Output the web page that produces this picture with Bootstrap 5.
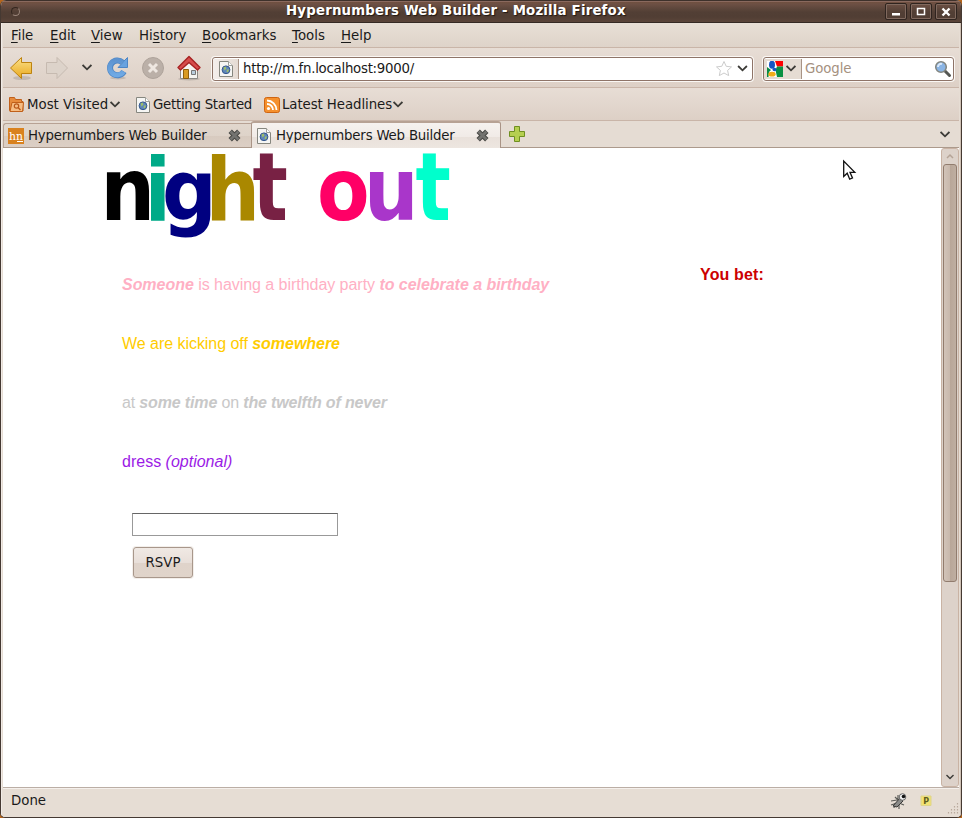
<!DOCTYPE html>
<html lang="en">
<head>
<meta charset="utf-8">
<title>Hypernumbers Web Builder</title>
<link href="https://cdn.jsdelivr.net/npm/bootstrap@5.3.0/dist/css/bootstrap.min.css" rel="stylesheet">
<style>
html,body{height:818px;overflow:hidden}
body{font-family:"DejaVu Sans",sans-serif;font-size:13.33px;line-height:16px;color:#1a1a1a;background:#b5651d}
svg{display:block;flex:none}
.win{width:962px;height:818px;border:solid #453932;border-width:0 1px 1px;border-radius:6px 6px 5px 5px;background:#e6ddd4;overflow:hidden}
.title-row{height:23px;background:linear-gradient(#3e312b 0,#3e312b 1px,#8a695e 1px,#8a695e 2px,#70503f 2px,#6d5044 4px,#523f35 12px,#513e34 17px,#5b453a 22px,#352a24 22px)}
.title-row h1{font-size:13.33px;line-height:20px;letter-spacing:.18px;font-weight:700;color:#fff;text-shadow:1px 1px 1px #211711;width:345px;margin:-2px auto 0 269px;white-space:nowrap}
.dot-btn{width:9px;height:9px;border:1px solid #33261f;border-right-color:#9a857a;border-bottom-color:#9a857a;border-radius:50%;margin-left:10px;margin-right:-3px}
.win-btn{width:22px;height:17px;border:1px solid #2f241f;border-radius:2px;box-shadow:inset 0 0 0 1px #80695e;margin-right:3px}
.win-btn:last-child{margin-right:4px}
.inner{padding:0 2px;box-shadow:inset 1px 0 #f1ebe6,inset -1px 0 #cfc1b5}
.bar{border-bottom:1px solid #c9b5a8;box-shadow:0 1px #f3eee9}
.menu-row{height:25px;padding-top:2px;background:linear-gradient(#e8dfd6,#ded3c9)}
.menu-row span{white-space:nowrap}
.menu-row u{text-underline-offset:2px}
.tool-row{height:40px;background:linear-gradient(#e7ddd5,#ddd0c6)}
.mark-row{height:33px;padding-top:1px;background:linear-gradient(#e7ddd5,#ddd0c6);white-space:nowrap}
.tight{letter-spacing:-.27px}
.tab-row{height:27px;border-bottom:1px solid #ac9a8c;background:#e5dcd3}
.field{height:24px;margin-top:2px;border:1px solid #8e7468;border-radius:3px;background:#fff;box-shadow:0 0 0 1px #faf7f4}
.field .ident{width:26px;height:20px;border-right:1px solid #a89486;background:linear-gradient(90deg,#f4efec,#e5dbd3)}
.tab-pane-btn{height:24px;margin-top:2px;width:248px;border:1px solid #b7a294;border-bottom:0;border-right:0;border-radius:3px 0 0 0;background:linear-gradient(#e1d7cd 0,#ded3c9 50%,#d7cabf 50%,#dccfc5);white-space:nowrap}
.tab-pane-btn span{width:200px;letter-spacing:-.2px}
.tab-pane-btn.is-front{width:250px;height:27px;margin-top:0;border-top:2px solid #b7a294;border-right:1px solid #a99486;border-left:1px solid #a99486;border-radius:3px 3px 0 0;background:linear-gradient(#f6f2ef 0,#f1ebe7 54%,#e9e1db 54%,#ede6e0)}
.view{height:639px;background:#fff;font-family:"Liberation Sans",Arial,sans-serif;font-size:16px;line-height:19px}
.page-area{width:938px}
.banner{overflow:visible}
.invite{padding-left:119px;width:697px}
.invite p{margin:0 0 40px;white-space:nowrap;letter-spacing:-.04px}
.invite .c-gray{letter-spacing:-.15px}
.invite .c-purple{letter-spacing:0}
.c-pink{color:#ffb0c4}.c-gold{color:#ffcc00}.c-gray{color:#c8c8c8}.c-purple{color:#9b1ae6}.c-red{color:#cc0000}
.answer{width:206px;height:23px;border:1px solid #999;border-top-color:#666;margin:42px 0 11px 10px;padding:0 4px;border-radius:0;background:#fff;display:block}
.rsvp{width:60px;height:31px;margin-left:11px;border:1px solid #a8978b;border-radius:3px;padding:0;font:13.33px/28px "DejaVu Sans",sans-serif;color:#1a1a1a;background:linear-gradient(#f0e9e4 0,#e8dfd9 50%,#dfd3ca 50%,#e0d4ca);box-shadow:0 0 0 1px #f3efeb}
.scroller{width:18px;border:1px solid #c9b3a4;border-radius:3px;background:#ddd2ca}
.thumb{width:14px;height:418px;border:1px solid #917c6e;border-radius:3px;background:linear-gradient(90deg,#d2c3b8 0,#c8b8ac 50%,#b8a698 50%,#bfaea1)}
.status-row{height:30px;border-top:1px solid #bbaea5;box-shadow:inset 0 1px #f5f0ec;background:#e6ddd4}
.pointer{position:absolute;left:842px;top:159px}
</style>
<script src="https://cdn.jsdelivr.net/npm/bootstrap@5.3.0/dist/js/bootstrap.bundle.min.js"></script>
</head>
<body>
<svg width="0" height="0" class="position-absolute">
<defs>
<linearGradient id="gy" x1="0" y1="0" x2="0" y2="1"><stop offset="0" stop-color="#fbe08a"/><stop offset="1" stop-color="#e9a81c"/></linearGradient>
<linearGradient id="gb" x1="0" y1="0" x2="0" y2="1"><stop offset="0" stop-color="#5d93d0"/><stop offset="1" stop-color="#6fa9e4"/></linearGradient>
<symbol id="doc" viewBox="0 0 14 16"><path d="M.5.5h9l4 4v11H.5z" fill="#f6f6f4" stroke="#86877f"/><path d="M9.500.5v4h4" fill="#fff" stroke="#a0a19b"/><circle cx="7" cy="8.800" r="3.900" fill="#5f86bb" stroke="#34568c"/><path d="M4.500 6.500l2-1 1 2-2 2zM8 8.500l2 0-1 3-1.500-1z" fill="#9fc06a"/></symbol>
<symbol id="chev" viewBox="0 0 10 7"><path d="M.6 1L5 5.300 9.400 1" fill="none" stroke="#3c3b37" stroke-width="1.800"/></symbol>
<symbol id="xx" viewBox="0 0 13 13"><path d="M2.200 2.200l8.600 8.600m0-8.600l-8.600 8.600" stroke="#484845" stroke-width="4.800"/><path d="M2.500 2.500l8 8m0-8l-8 8" stroke="#737370" stroke-width="2.800"/></symbol>
</defs></svg>
<div class="win">
<header class="title-row d-flex align-items-center">
<div class="dot-btn"></div><h1>Hypernumbers Web Builder - Mozilla Firefox</h1>
<div class="win-btn d-flex flex-shrink-0 align-items-center justify-content-center"><svg width="12" height="10"><path d="M2 6h8v2.500H2z" fill="#fff"/></svg></div>
<div class="win-btn d-flex flex-shrink-0 align-items-center justify-content-center"><svg width="12" height="10"><path d="M2.500 1.500h7v6h-7z" fill="none" stroke="#fff" stroke-width="1.500"/></svg></div>
<div class="win-btn d-flex flex-shrink-0 align-items-center justify-content-center"><svg width="12" height="10"><path d="M2.500 1.500l7 7m0-7l-7 7" stroke="#fff" stroke-width="2.400"/></svg></div>
</header>
<div class="inner">
<nav class="menu-row bar d-flex align-items-center">
<span style="margin-left:8px;width:39px"><u>F</u>ile</span><span style="width:41px"><u>E</u>dit</span><span style="width:48px"><u>V</u>iew</span><span style="width:63px">Hi<u>s</u>tory</span><span style="width:90px"><u>B</u>ookmarks</span><span style="width:49px"><u>T</u>ools</span><span><u>H</u>elp</span>
</nav>
<div class="tool-row bar d-flex align-items-center">
<svg width="36" height="26" viewBox="0 0 36 26"><ellipse cx="19" cy="23" rx="9" ry="2" fill="#000" opacity=".12"/><path d="M7.500 13L18.500 2.500v5h10v11h-10v5z" fill="url(#gy)" stroke="#bd830f" stroke-linejoin="round"/></svg>
<svg width="36" height="26" viewBox="0 0 36 26"><path d="M28.500 13L18 2.500v5H7.500v11H18v5z" fill="#ddd3ca" stroke="#c6bab0" stroke-linejoin="round"/></svg>
<svg width="10" height="7" style="margin-left:7px"><use href="#chev"/></svg>
<svg width="24" height="26" viewBox="0 0 24 26" style="margin-left:13px"><ellipse cx="13" cy="23" rx="8" ry="1.500" opacity=".12"/><path d="M18.900 16.500A7.400 7.400 0 1 1 17.500 7.500" fill="none" stroke="#4e86c5" stroke-width="6"/><path d="M22.500 2.500v10h-9.500l3.500-3.500 2.500-3z" fill="#69a2df" stroke="#4e86c5"/><path d="M18.500 16.500A7.400 7.400 0 1 1 17.500 7.500" fill="none" stroke="url(#gb)" stroke-width="4.500"/></svg>
<svg width="24" height="26" viewBox="0 0 24 26" style="margin-left:12px"><circle cx="12" cy="13" r="10.500" fill="#bbb0a8" stroke="#aea39b"/><path d="M8 9l8 8m0-8l-8 8" stroke="#eee7e1" stroke-width="3"/></svg>
<svg width="26" height="26" viewBox="0 0 26 26" style="margin-left:11px"><ellipse cx="13" cy="24" rx="11" ry="1.500" opacity=".15"/><path d="M4.500 13L13 6l8.500 7v10.500h-17z" fill="#f5f4f1" stroke="#8b8984"/><path d="M7.500 14.500h5v9h-5z" fill="#d99a22" stroke="#8f5e0c"/><path d="M15.500 15.500h4v4h-4z" fill="#b9cddd" stroke="#777"/><path d="M13 1.500L24 12.500l-2.500 2.500L13 7.500 4.500 15 2 12.500z" fill="#d64c4c" stroke="#a62222" stroke-width="1.400" stroke-linejoin="round"/></svg>
<div class="field d-flex align-items-center" style="width:541px;margin-left:10px"><div class="ident d-flex align-items-center justify-content-center"><svg width="14" height="16"><use href="#doc"/></svg></div><span class="flex-grow-1 ps-1 tight">http://m.fn.localhost:9000/</span><svg width="18" height="17" viewBox="0 0 18 17"><path d="M9 1.500l2.200 4.800 5.300.6-3.900 3.500 1.100 5.200L9 13l-4.700 2.600 1.100-5.200L1.500 6.900l5.300-.6z" fill="#fff" stroke="#ccc" stroke-linejoin="round"/></svg><svg width="11" height="7" style="margin:0 4px 0 4px"><use href="#chev"/></svg></div>
<div class="field d-flex align-items-center" style="width:191px;margin-left:10px"><div class="ident d-flex align-items-center" style="width:38px;background:#e5dcd3"><svg width="16" height="16" viewBox="0 0 16 16" style="margin-left:3px"><path d="M0 0h16v16H0z" fill="#fff"/><path d="M8 0h8v5.500H10z" fill="#f00"/><path d="M10 5.500h6V16H10L8.500 9z" fill="#099143"/><path d="M0 6v10h1.500L2 11l2-2z" fill="#098b43"/><ellipse cx="5" cy="3.700" rx="3" ry="4" fill="#1755c4"/><ellipse cx="7.500" cy="8.500" rx="2" ry="1.700" fill="#1755c4"/><ellipse cx="5" cy="13.200" rx="3.600" ry="2.400" fill="#f2ad19"/></svg><svg width="10" height="7" style="margin-left:3px"><use href="#chev"/></svg></div><span class="flex-grow-1" style="color:#a5917f;padding-left:3px;letter-spacing:-.1px">Google</span><svg width="18" height="18" viewBox="0 0 18 18" style="margin-right:1px"><path d="M11 11l4.500 4.500" stroke="#555753" stroke-width="3" stroke-linecap="round"/><circle cx="7" cy="7" r="5.300" fill="#8bb5e5" stroke="#83857f" stroke-width="1.500"/><path d="M4 7a3 3 0 0 1 4-3" stroke="#d9e9fb" stroke-width="2" fill="none"/></svg></div>
</div>
<div class="mark-row bar d-flex align-items-center">
<svg width="15" height="15" viewBox="0 0 15 15" style="margin-left:6px;margin-right:3px"><path d="M.5 13.500v-13h5l1 2h6v2h1.500v9.500z" fill="#e78b3c" stroke="#c0601a"/><path d="M3 5.500h11.500l-1 9H1z" fill="#f6bd83" stroke="#c0601a"/><circle cx="7.500" cy="9" r="2.200" fill="none" stroke="#b9581a" stroke-width="1.200"/><path d="M9 10.500l2.500 2.500" stroke="#b9581a" stroke-width="1.400"/></svg>
<span style="width:83px">Most Visited</span><svg width="10" height="7"><use href="#chev"/></svg>
<svg width="14" height="16" style="margin-left:16px;margin-right:3px"><use href="#doc"/></svg><span class="tight" style="width:111px">Getting Started</span>
<svg width="16" height="16" viewBox="0 0 16 16" style="margin-right:2px"><rect x=".5" y=".5" width="15" height="15" rx="2" fill="#f5902d" stroke="#cf6511"/><circle cx="4.500" cy="11.500" r="1.600" fill="#fff"/><path d="M3 7a6 6 0 0 1 6 6M3 3.500A9.500 9.500 0 0 1 12.500 13" fill="none" stroke="#fff" stroke-width="1.800"/></svg>
<span style="width:111px;letter-spacing:-.08px">Latest Headlines</span><svg width="10" height="7"><use href="#chev"/></svg>
</div>
<div class="tab-row d-flex">
<div class="tab-pane-btn d-flex align-items-center"><svg width="16" height="16" style="margin:0 4px 0 4px"><path d="M0 0h16v16H0z" fill="#d9821f"/><text x="1" y="12" font-family="DejaVu Serif" font-size="11" fill="#fff" textLength="14" lengthAdjust="spacingAndGlyphs">hn</text><path d="M9 13.500h6" stroke="#fff"/></svg><span>Hypernumbers Web Builder</span><svg width="13" height="13"><use href="#xx"/></svg></div>
<div class="tab-pane-btn is-front d-flex align-items-center"><svg width="14" height="16" style="margin:0 5px 0 5px"><use href="#doc"/></svg><span>Hypernumbers Web Builder</span><svg width="13" height="13"><use href="#xx"/></svg></div>
<svg width="18" height="18" viewBox="0 0 18 18" style="margin:4px 0 0 7px"><path d="M6.500 1.500h5v5h5v5h-5v5h-5v-5h-5v-5h5z" fill="#b5cf50" stroke="#6f8f20"/></svg>
<svg width="10" height="7" class="ms-auto" style="margin:10px 9px 0 0"><use href="#chev"/></svg>
</div>
<main class="view d-flex">
<div class="page-area">
<svg class="banner" width="500" height="96" viewBox="3 148 500 96" font-family="DejaVu Sans" font-weight="700" font-size="88" role="heading">
<text transform="translate(100.500 220)scale(.87 1)">n</text><text transform="translate(144.500 220)scale(.88 1)" fill="#00aa88">i</text>
<text transform="translate(162 220)scale(.87 .96)" fill="#000080">g</text><text transform="translate(205.500 220)scale(.87 1)" fill="#aa8800">h</text><text transform="translate(252.500 220)scale(.84 1.08)" fill="#782144">t</text>
<text transform="translate(317 220)scale(.87 1)" fill="#ff0066">o</text><text transform="translate(364 220)scale(.87 1)" fill="#a936ca">u</text><text transform="translate(415.500 220)scale(.84 1.08)" fill="#00ffcc">t</text>
</svg>
<div class="d-flex">
<section class="invite" style="padding-top:31px">
<p class="c-pink"><b><i>Someone</i></b> is having a birthday party <b><i>to celebrate a birthday</i></b></p>
<p class="c-gold">We are kicking off <b><i>somewhere</i></b></p>
<p class="c-gray">at <b><i>some time</i></b> on <b><i>the twelfth of never</i></b></p>
<p class="c-purple">dress <i>(optional)</i></p>
<input class="answer" type="text" aria-label="Name"><button class="rsvp" type="button">RSVP</button>
</section>
<aside class="c-red fw-bold" style="padding-top:21px;letter-spacing:.15px">You bet:</aside>
</div></div>
<div class="scroller d-flex flex-column align-items-center flex-shrink-0"><svg width="10" height="7" viewBox="0 0 10 7" style="margin:4px 0"><path d="M2 5l3-3 3 3" fill="none" stroke="#b5a497" stroke-width="1.500"/></svg><div class="thumb"></div><svg width="8" height="6" viewBox="0 0 10 7" class="mt-auto" style="margin-bottom:6px"><use href="#chev"/></svg></div>
</main>
<footer class="status-row d-flex align-items-center"><span style="padding-left:8px;margin-top:-4px">Done</span>
<svg width="18" height="18" viewBox="0 0 18 18" class="ms-auto" style="margin-right:12px;margin-top:-4px"><path d="M1 9l6-1m-3 8l1-5M5 5l4 4m0 8V11m-8 2l6-2m2 0l5 2M8 3v5" stroke="#5c5c58" stroke-width="1.200"/><path d="M3 14L10 6l3 3-6 6z" fill="#8a8a88" stroke="#3a3a38"/><circle cx="12.500" cy="5" r="3.300" fill="#eee" stroke="#666"/><circle cx="13.500" cy="4.500" r="1.800" fill="#111"/></svg>
<svg width="12" height="12" viewBox="0 0 12 12" style="margin-right:15px;margin-top:-3px"><path d="M1 1h10v9.500H1z" fill="#f2e272" stroke="#ded48a"/><text x="3.300" y="8.600" font-family="DejaVu Sans" font-weight="700" font-size="8" fill="#5e5d20">P</text></svg>
<svg width="12" height="12" viewBox="0 0 12 12" style="margin-top:12px;margin-right:0"><path d="M10.500 0v12M7.500 3v9M4.500 6v6M1.500 9v3" stroke="#b9aa9d" stroke-width="1.200" stroke-dasharray="1.500 1.500"/></svg></footer>
</div></div>
<svg class="pointer" width="15" height="24" viewBox="0 0 15 24"><path d="M1.700 2v15.500l3.500-3.300 2.500 6 2.800-1.200-2.500-5.700h4.800z" fill="#fff" stroke="#111" stroke-width="1.300"/></svg>
</body>
</html>
